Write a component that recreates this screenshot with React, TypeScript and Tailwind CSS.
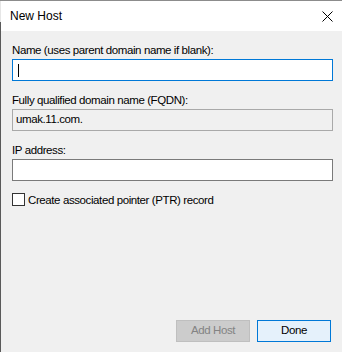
import React from "react";

const ui = "font-['Liberation_Sans','Arial',sans-serif] text-[11.5px] tracking-[-0.4px]";

const App = () => {
  return (
    <div className="w-[342px] h-[352px] flex flex-col bg-[#f0f0f0] text-black overflow-hidden font-['Liberation_Sans','Arial',sans-serif]">
      <div className="h-px shrink-0 bg-[#8c8c8c]" />
      <div className="flex-1 flex">
        {/* left edge of the window behind */}
        <div className="w-px flex flex-col">
          <div className="h-[21px] bg-[#e6e6e6]" />
          <div className="flex-1 bg-[#5a5a5a]" />
        </div>

        <div className="flex-1 flex flex-col">
          {/* title bar */}
          <div className="h-[30px] shrink-0 flex items-center justify-between bg-white pl-[9px] pr-[9px]">
            <span className="text-[12px] leading-none">New Host</span>
            <svg width="11" height="11" viewBox="0 0 11 11">
              <path d="M0.5 0.5 L10.5 10.5 M10.5 0.5 L0.5 10.5" stroke="#000" strokeWidth="1" fill="none" />
            </svg>
          </div>

          {/* body */}
          <div className={`flex-1 flex flex-col pl-[11px] pr-[9px] pt-[12px] pb-[10px] ${ui}`}>
            <label className="leading-[14px]">Name (uses parent domain name if blank):</label>
            <div className="mt-[2px] h-[22px] bg-white border border-[#0078d7] flex items-center pl-[5px]">
              <span className="w-px h-[13px] bg-black" />
            </div>

            <label className="mt-[12px] leading-[14px]">Fully qualified domain name (FQDN):</label>
            <div className="mt-[2px] h-[22px] bg-[#f0f0f0] border border-[#a9a9a9] flex items-center pl-[3px]">
              umak.11.com.
            </div>

            <label className="mt-[12px] leading-[14px]">IP address:</label>
            <div className="mt-[2px] h-[22px] bg-white border border-[#7a7a7a]" />

            <div className="mt-[12px] flex items-center gap-[3px] h-[13px]">
              <span className="w-[13px] h-[13px] border border-[#333] bg-white" />
              <span className="leading-[14px]">Create associated pointer (PTR) record</span>
            </div>

            <div className="mt-auto flex justify-end gap-[7px] pr-[2px]">
              <button className={`w-[74px] h-[22px] bg-[#cccccc] border border-[#bfbfbf] text-[#838383] ${ui}`}>
                Add Host
              </button>
              <button className={`w-[74px] h-[22px] bg-[#e5f1fb] border border-[#0078d7] text-black ${ui}`}>
                Done
              </button>
            </div>
          </div>
        </div>
      </div>
    </div>
  );
};

export default App;
